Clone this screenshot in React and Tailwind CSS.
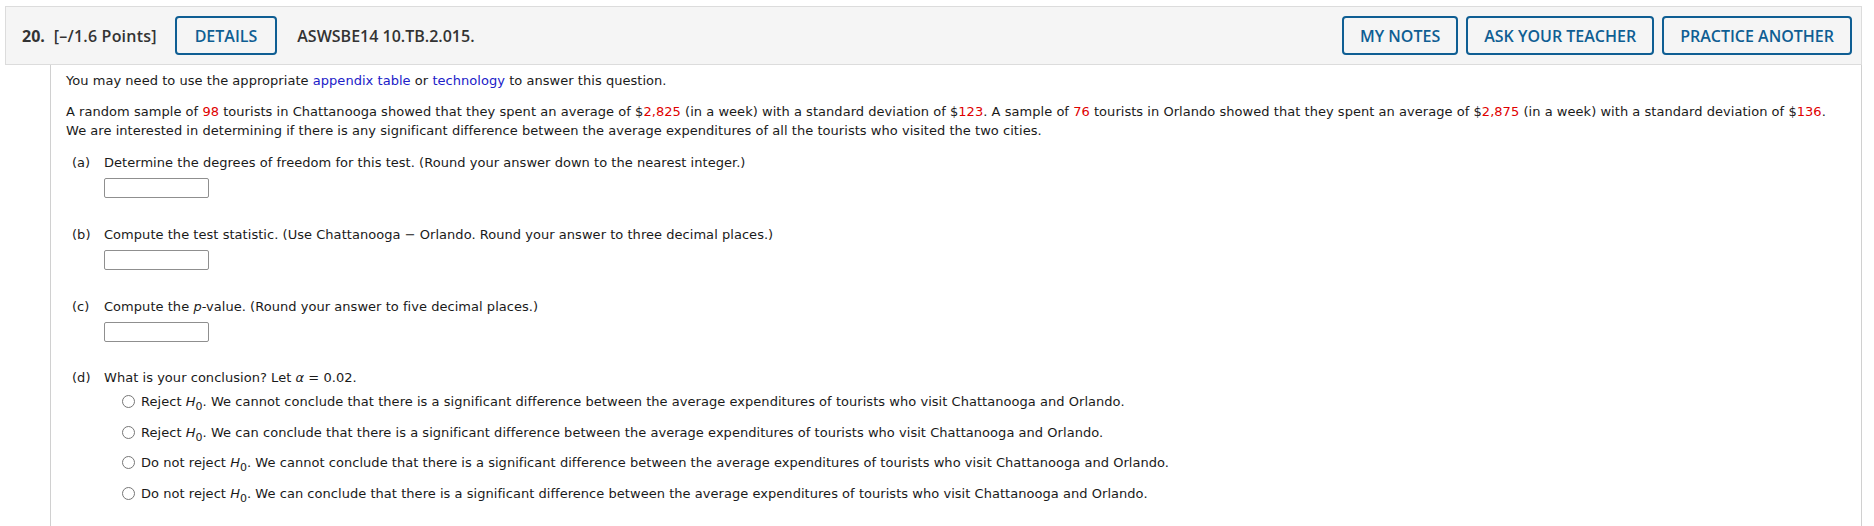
const body = { fontFamily: '"DejaVu Sans", Verdana, sans-serif' };

function H0() {
  return (
    <span>
      <i>H</i>
      <sub className="relative top-[4px] text-[11px] align-baseline">0</sub>
    </span>
  );
}

function Red({ children }) {
  return <span className="text-[#e00000]">{children}</span>;
}

function Part({ label, children, input = true }) {
  return (
    <div className="flex">
      <span className="w-[32px] shrink-0">{label}</span>
      <div>
        <div>{children}</div>
        {input && (
          <div className="mt-[6px] w-[105px] h-[20px] border border-[#8f8f8f] rounded-[2px] bg-white" />
        )}
      </div>
    </div>
  );
}

const options = [
  ["Reject", "cannot"],
  ["Reject", "can"],
  ["Do not reject", "cannot"],
  ["Do not reject", "can"],
];

export default function App() {
  return (
    <div className="min-h-screen bg-white pt-[6px] pl-[5px] pr-[12px]">
      {/* header */}
      <div
        className="h-[59px] flex items-center bg-[#f5f5f5] border border-[#dcdcdc] pl-[16px] pr-[9px] text-[#333]"
        style={{ fontFamily: '"Open Sans", sans-serif' }}
      >
        <span className="text-[16px] font-bold">20.</span>
        <span className="ml-[9px] text-[16px] font-semibold tracking-[0.2px]">[–/1.6 Points]</span>
        <button className="ml-[18px] h-[39px] px-[18px] border-2 border-[#0f5e93] rounded-[4px] text-[#0f5e93] text-[16px] font-semibold">
          DETAILS
        </button>
        <span className="ml-[20px] text-[16px] font-semibold">ASWSBE14 10.TB.2.015.</span>
        <div className="ml-auto flex gap-[8px]">
          {["MY NOTES", "ASK YOUR TEACHER", "PRACTICE ANOTHER"].map((t) => (
            <button
              key={t}
              className="h-[39px] px-[16px] border-2 border-[#0f5e93] rounded-[4px] text-[#0f5e93] text-[16px] font-semibold"
            >
              {t}
            </button>
          ))}
        </div>
      </div>

      {/* question body */}
      <div
        className="ml-[45px] min-h-[461px] border-x border-[#d0d0d0] pl-[15px] pr-[20px] pt-[6px] text-[13px] leading-[19px] tracking-[0.04px] text-[#1a1a1a]"
        style={body}
      >
        <p>
          You may need to use the appropriate{" "}
          <span className="text-[#2020c8]">appendix table</span> or{" "}
          <span className="text-[#2020c8]">technology</span> to answer this question.
        </p>
        <p className="mt-[12px]">
          A random sample of <Red>98</Red> tourists in Chattanooga showed that they spent an
          average of $<Red>2,825</Red> (in a week) with a standard deviation of $<Red>123</Red>.
          A sample of <Red>76</Red> tourists in Orlando showed that they spent an average of $
          <Red>2,875</Red> (in a week) with a standard deviation of $<Red>136</Red>.
          <br />
          We are interested in determining if there is any significant difference between the
          average expenditures of all the tourists who visited the two cities.
        </p>

        <div className="pl-[6px] mt-[13px] flex flex-col">
          <Part label="(a)">
            Determine the degrees of freedom for this test. (Round your answer down to the
            nearest integer.)
          </Part>
          <div className="mt-[27px]">
            <Part label="(b)">
              Compute the test statistic. (Use Chattanooga − Orlando. Round your answer to three
              decimal places.)
            </Part>
          </div>
          <div className="mt-[27px]">
            <Part label="(c)">
              Compute the <i>p</i>-value. (Round your answer to five decimal places.)
            </Part>
          </div>
          <div className="mt-[26px]">
            <Part label="(d)" input={false}>
              What is your conclusion? Let <i>α</i> = 0.02.
            </Part>
          </div>
          <div className="mt-[5px] ml-[50px] flex flex-col gap-[11.5px]">
            {options.map(([a, b], i) => (
              <label key={i} className="flex items-center">
                <span className="w-[13px] h-[13px] rounded-full border border-[#767676] bg-white shrink-0" />
                <span className="ml-[6px]">
                  {a} <H0 />. We {b} conclude that there is a significant difference between the
                  average expenditures of tourists who visit Chattanooga and Orlando.
                </span>
              </label>
            ))}
          </div>
        </div>
      </div>
    </div>
  );
}
